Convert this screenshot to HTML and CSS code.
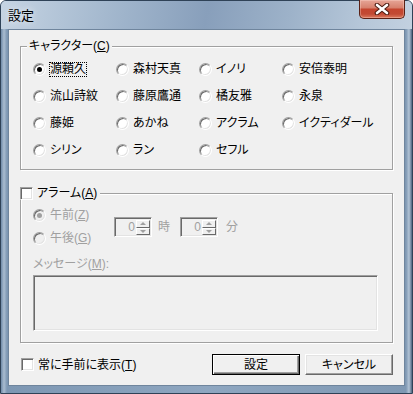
FILE: index.html
```html
<!DOCTYPE html>
<html lang="ja">
<head>
	<meta charset="UTF-8">
	<title>設定</title>
	<link rel="stylesheet" href="styles.css">
</head>
<body>
	<div class="window">
		<div class="titlebar">
			<span class="title">設定</span>
			<button class="close" aria-label="閉じる">
				<svg width="16" height="12" viewBox="0 0 16 12">
					<path d="M3 2 L13 10 M13 2 L3 10" stroke="#4a1a10" stroke-width="4.6" stroke-linecap="round"/>
					<path d="M3 2 L13 10 M13 2 L3 10" stroke="#fff" stroke-width="2.6" stroke-linecap="round"/>
				</svg>
			</button>
		</div>

		<div class="client">
			<!-- キャラクター -->
			<div class="group">
				<div class="group-title">キャラクター(<u>C</u>)</div>
				<div class="radio-grid">
					<label class="radio checked"><span class="dot"></span><span class="text focus">源頼久</span></label>
					<label class="radio"><span class="dot"></span><span class="text">森村天真</span></label>
					<label class="radio"><span class="dot"></span><span class="text">イノリ</span></label>
					<label class="radio"><span class="dot"></span><span class="text">安倍泰明</span></label>
					<label class="radio"><span class="dot"></span><span class="text">流山詩紋</span></label>
					<label class="radio"><span class="dot"></span><span class="text">藤原鷹通</span></label>
					<label class="radio"><span class="dot"></span><span class="text">橘友雅</span></label>
					<label class="radio"><span class="dot"></span><span class="text">永泉</span></label>
					<label class="radio"><span class="dot"></span><span class="text">藤姫</span></label>
					<label class="radio"><span class="dot"></span><span class="text">あかね</span></label>
					<label class="radio"><span class="dot"></span><span class="text">アクラム</span></label>
					<label class="radio"><span class="dot"></span><span class="text">イクティダール</span></label>
					<label class="radio"><span class="dot"></span><span class="text">シリン</span></label>
					<label class="radio"><span class="dot"></span><span class="text">ラン</span></label>
					<label class="radio"><span class="dot"></span><span class="text">セフル</span></label>
				</div>
			</div>

			<!-- アラーム -->
			<div class="group alarm">
				<label class="group-title check-row"><span class="check"></span><span>アラーム(<u>A</u>)</span></label>
				<div class="alarm-time disabled">
					<div class="ampm">
						<label class="radio checked"><span class="dot"></span><span class="text">午前(<u>Z</u>)</span></label>
						<label class="radio"><span class="dot"></span><span class="text">午後(<u>G</u>)</span></label>
					</div>
					<div class="spin">
						<span class="value">0</span>
						<span class="arrows"><span class="up"></span><span class="down"></span></span>
					</div>
					<span class="unit">時</span>
					<div class="spin spin-min">
						<span class="value">0</span>
						<span class="arrows"><span class="up"></span><span class="down"></span></span>
					</div>
					<span class="unit">分</span>
				</div>
				<div class="msg-label disabled">メッセージ(<u>M</u>):</div>
				<div class="msg-box"></div>
			</div>

			<div class="footer">
				<label class="check-row"><span class="check"></span><span>常に手前に表示(<u>T</u>)</span></label>
				<div class="buttons">
					<button class="btn default">設定</button>
					<button class="btn">キャンセル</button>
				</div>
			</div>
		</div>
	</div>
</body>
</html>
```

FILE: styles.css
```css
/* Base */
:root {
	--face: #f0f0f0;
	--shadow: #a0a0a0;
	--dark: #696969;
	--light: #e3e3e3;
	--gray-text: #a0a0a0;
}

body {
	margin: 0;
	background: #fff;
	font: 12px/14px "Liberation Sans", "Noto Sans CJK JP", sans-serif;
	font-feature-settings: "palt";
	color: #000;
	white-space: nowrap;
}

u {
	text-decoration: underline;
}

/* Window frame */
.window {
	width: 413px;
	height: 394px;
	box-sizing: border-box;
	display: flex;
	flex-direction: column;
	border: 1px solid #2f4257;
	border-radius: 6px 6px 0 0;
	padding: 0 7px 7px;
	background: linear-gradient(to right, #6f8aa8 0, #a9bcd0 3px, #7d97b3 6px, #8ea6c0 50%, #7f98b3 calc(100% - 6px), #b3c4d6 calc(100% - 3px), #4d6580 100%);
	box-shadow: inset 0 1px 0 rgba(255, 255, 255, 0.5);
}

.titlebar {
	height: 28px;
	margin: 0 -7px;
	padding: 0 7px;
	display: flex;
	justify-content: space-between;
	align-items: flex-start;
	border-radius: 5px 5px 0 0;
	background: linear-gradient(100deg, #c6d4e3 0%, #b2c4d7 15%, #9fb4cb 30%, #889fbb 50%, #9db2c9 70%, #b6c7d9 88%, #c3d1e0 100%);
}

.title {
	margin-top: 8px;
	font-size: 13px;
	text-shadow: 0 0 6px rgba(255, 255, 255, 0.9);
}

.close {
	width: 46px;
	height: 19px;
	margin-top: -1px;
	padding: 0;
	border: 1px solid #5a2116;
	border-top: none;
	border-radius: 0 0 5px 5px;
	background: linear-gradient(#e6a597 0%, #d7826f 42%, #c4452f 52%, #c24a34 78%, #dc7a5f 100%);
	box-shadow: inset 0 0 0 1px rgba(255, 220, 210, 0.35);
	display: flex;
	align-items: center;
	justify-content: center;
}

/* Client area */
.client {
	flex: 1;
	background: var(--face);
	border: 1px solid #6f859d;
	padding: 16px 11px 0;
}

/* Group boxes */
.group {
	border: 1px solid var(--shadow);
	box-shadow: 1px 1px 0 #fff, inset 1px 1px 0 #fff;
}

.group-title {
	width: fit-content;
	margin: -8px 0 0 6px;
	padding: 0 2px;
	background: var(--face);
}

.radio-grid {
	display: grid;
	grid-template-columns: repeat(4, 83px);
	grid-auto-rows: 27px;
	padding: 3px 0 5px 12px;
}

.radio {
	display: flex;
	align-items: center;
	gap: 3px;
}

.radio .dot {
	position: relative;
	flex-shrink: 0;
	width: 13px;
	height: 13px;
	box-sizing: border-box;
	border-radius: 50%;
	background: #fff;
	border: 1px solid;
	border-color: var(--shadow) #fff #fff var(--shadow);
	box-shadow: inset 1px 1px 0 var(--dark), inset -1px -1px 0 var(--light);
}

.radio.checked .dot::after {
	content: "";
	position: absolute;
	left: 3px;
	top: 3px;
	width: 5px;
	height: 5px;
	border-radius: 50%;
	background: #000;
}

.radio .text {
	border: 1px solid transparent;
	line-height: 13px;
}

.radio .text.focus {
	border: 1px dotted #000;
}

/* Checkboxes */
.check-row {
	display: flex;
	align-items: center;
	gap: 4px;
}

.check {
	flex-shrink: 0;
	width: 13px;
	height: 13px;
	box-sizing: border-box;
	background: #fff;
	border: 1px solid;
	border-color: var(--shadow) #fff #fff var(--shadow);
	box-shadow: inset 1px 1px 0 var(--dark), inset -1px -1px 0 var(--light);
}

/* Alarm group */
.alarm {
	margin-top: 23px;
}

.alarm .group-title {
	margin-left: -1px;
	padding: 0 3px 0 0;
}

.disabled,
.disabled .text {
	color: var(--gray-text);
}

.disabled .radio .dot {
	background: var(--face);
}

.disabled .radio.checked .dot::after {
	background: var(--gray-text);
}

.alarm-time {
	display: flex;
	align-items: center;
	margin-top: 4px;
	padding-left: 12px;
}

.ampm {
	width: 81px;
	display: grid;
	grid-auto-rows: 23px;
}

.spin {
	width: 38px;
	height: 20px;
	box-sizing: border-box;
	display: flex;
	padding: 1px;
	border: 1px solid;
	border-color: var(--shadow) #fff #fff var(--shadow);
	box-shadow: inset 1px 1px 0 var(--dark), inset -1px -1px 0 var(--light);
	background: var(--face);
}

.spin .value {
	flex: 1;
	text-align: right;
	padding: 1px 1px 0 0;
	line-height: 15px;
}

.spin .arrows {
	width: 14px;
	display: flex;
	flex-direction: column;
	margin: 1px 0 0 0;
}

.spin .up,
.spin .down {
	flex: 1;
	display: flex;
	align-items: center;
	justify-content: center;
	box-sizing: border-box;
	border: 1px solid;
	border-color: #fff var(--dark) var(--dark) #fff;
	background: var(--face);
}

.spin .up::after,
.spin .down::after {
	content: "";
	border-left: 3px solid transparent;
	border-right: 3px solid transparent;
}

.spin .up::after {
	border-bottom: 3px solid var(--gray-text);
}

.spin .down::after {
	border-top: 3px solid var(--gray-text);
}

.unit {
	margin: 0 10px 0 6px;
}

.unit:last-child {
	margin: 0 0 0 8px;
}

.msg-label {
	margin: 7px 0 0 12px;
}

.msg-box {
	height: 56px;
	box-sizing: border-box;
	margin: 4px 14px 11px 12px;
	border: 1px solid;
	border-color: var(--shadow) #fff #fff var(--shadow);
	box-shadow: inset 1px 1px 0 var(--dark), inset -1px -1px 0 var(--light);
	background: var(--face);
}

/* Footer */
.footer {
	display: flex;
	justify-content: space-between;
	align-items: center;
	margin-top: 11px;
}

.footer .check-row {
	margin-left: 1px;
}

.buttons {
	display: flex;
	gap: 5px;
}

.btn {
	width: 88px;
	height: 21px;
	padding: 0;
	font: inherit;
	color: #000;
	background: var(--face);
	border: 1px solid;
	border-color: #fff var(--dark) var(--dark) #fff;
	box-shadow: inset -1px -1px 0 var(--shadow), inset 1px 1px 0 var(--light);
}

.btn.default {
	border: 1px solid #000;
	box-shadow: inset 1px 1px 0 #fff, inset -1px -1px 0 var(--dark), inset -2px -2px 0 var(--shadow);
}
```
